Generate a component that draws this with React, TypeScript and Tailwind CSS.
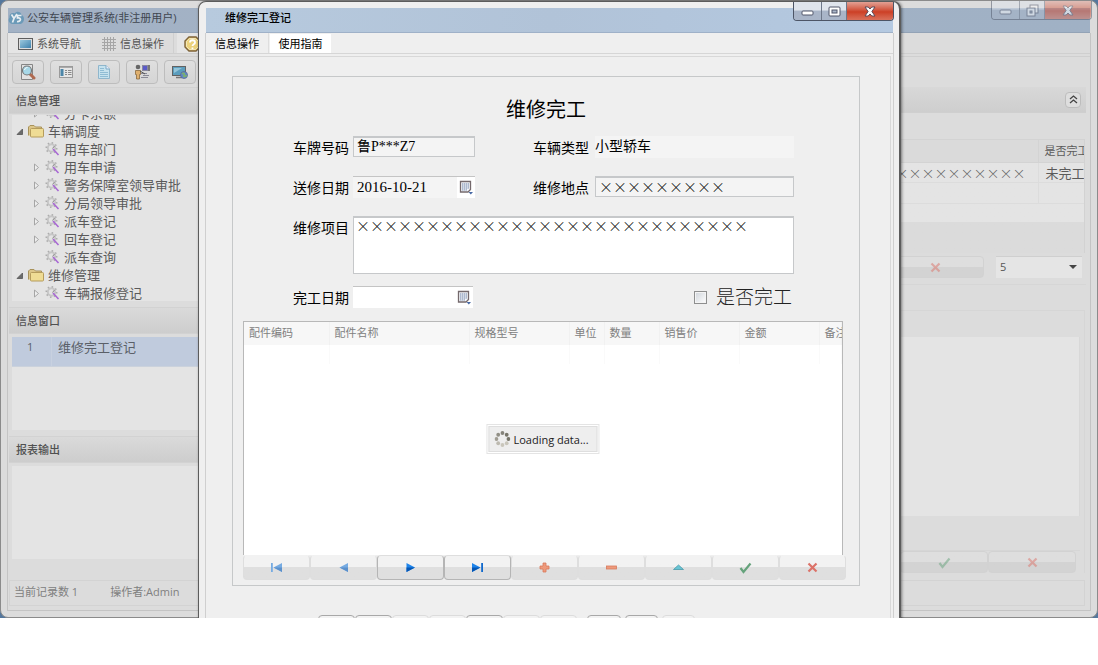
import React, { useState } from "react";

const UI = "font-['Open_Sans','Noto_Sans_CJK_SC',sans-serif]";
const CJK = "font-['Noto_Sans_CJK_SC',sans-serif]";
const FIELD = "font-['Liberation_Serif','Noto_Sans_CJK_SC',serif]";

/* ---------- icons ---------- */

function WindowButtons({ dim = false, restore = false }: { dim?: boolean; restore?: boolean }) {
  return (
    <div
      className={`absolute top-0 right-[5px] flex h-[19px] overflow-hidden rounded-b border border-t-0 border-[#4d5566] ${dim ? "opacity-50" : ""}`}
    >
      <button aria-label="最小化" className="flex w-[27px] items-end justify-center bg-linear-to-b from-[#dfe4ec] from-45% to-[#a9b5c8] to-50% pb-1">
        <svg width="13" height="6" viewBox="0 0 13 6"><rect x="1" y="1" width="11" height="4" rx="1" fill="#fff" stroke="#50566a" /></svg>
      </button>
      <button aria-label="最大化" className="flex w-[26px] items-center justify-center border-x border-[#6d7789] bg-linear-to-b from-[#dfe4ec] from-45% to-[#a9b5c8] to-50%">
        {restore ? (
          <svg width="13" height="13" viewBox="0 0 13 13">
            <rect x="4" y="1" width="8" height="8" fill="#fff" stroke="#50566a" />
            <rect x="1" y="4" width="8" height="8" fill="#fff" stroke="#50566a" />
            <rect x="4" y="7" width="2" height="2" fill="#a9b5c8" stroke="#50566a" />
          </svg>
        ) : (
          <svg width="13" height="11" viewBox="0 0 13 11">
            <rect x="1" y="1" width="11" height="9" rx="1" fill="#fff" stroke="#50566a" />
            <rect x="4" y="4" width="5" height="3" fill="#a9b5c8" stroke="#50566a" />
          </svg>
        )}
      </button>
      <button aria-label="关闭" className="flex w-[46px] items-center justify-center bg-linear-to-b from-[#e2a094] from-0% via-[#cc3f25] via-55% to-[#d9705a]">
        <svg width="12" height="11" viewBox="0 0 12 11">
          <path d="M1 1h3.2L6 3l1.800-2H11L7.900 5.500 11 10H7.800L6 8l-1.800 2H1l3.100-4.500z" fill="#fff" stroke="#5a4a58" />
        </svg>
      </button>
    </div>
  );
}

function MonitorIcon() {
  return (
    <svg width="15" height="12" viewBox="0 0 15 12">
      <defs>
        <linearGradient id="mon" x1="0" y1="0" x2="1" y2="1">
          <stop offset="0" stopColor="#9cc9de" /><stop offset="1" stopColor="#3f82ad" />
        </linearGradient>
      </defs>
      <rect x=".5" y=".5" width="14" height="11" fill="#ddd" stroke="#5e5e5e" />
      <rect x="2" y="2" width="11" height="8" fill="url(#mon)" />
    </svg>
  );
}

function GridIcon() {
  return (
    <svg width="14" height="14" viewBox="0 0 14 14" stroke="#a6a6a6" fill="none">
      <path d="M2.500 0v14M5.500 0v14M8.500 0v14M11.500 0v14M0 2.500h14M0 5.500h14M0 8.500h14M0 11.500h14" />
    </svg>
  );
}

function HelpIcon() {
  return (
    <svg width="17" height="16" viewBox="0 0 17 16" className="shrink-0">
      <path d="M5 1h7l4 4v6l-4 4H5l-4-4V5z" fill="#ecd27c" stroke="#7d6238" strokeWidth="1.400" />
      <path d="M5.500 2.500h6l3 3v5l-3 3h-6l-3-3v-5z" fill="none" stroke="#f3e7b8" />
      <path d="M6 6.500C6 3.500 11 3.500 11 6.500 11 8.500 8.500 8 8.500 10M8.500 11.500V13" fill="none" stroke="#fff" strokeWidth="1.800" />
    </svg>
  );
}

function LogoIcon() {
  return (
    <svg width="17" height="14" viewBox="0 0 17 14">
      <path d="M5 13C1 13-.5 9 1.500 6.500 1 3 4 1 6.500 2.500 9-.500 13 1 13.500 4 17 5 17 12 12.500 13z" fill="#6b9ab8" />
      <path d="M3.500 3.500l2.500 4 3-4.500M6 7.500L4.500 11.500M13.500 4.500H9.500v2.500c4-1 4 4-.5 3.500" fill="none" stroke="#e8eef2" strokeWidth="1.700" />
    </svg>
  );
}

const toolIcons: { name: string; icon: React.ReactNode }[] = [
  {
    name: "查询",
    icon: (
      <svg width="16" height="16" viewBox="0 0 16 16">
        <path d="M1.500.5h11v15h-11z" fill="#e2e2e2" stroke="#858585" />
        <path d="M9.500 9.500l4.500 4.500" stroke="#b06a50" strokeWidth="3" strokeLinecap="round" />
        <circle cx="7" cy="6.500" r="4.500" fill="#a7d8e8" stroke="#777" strokeWidth="1.200" />
        <path d="M4.500 6c.5-2 2-2.500 3-2.500" stroke="#fff" fill="none" />
      </svg>
    ),
  },
  {
    name: "列表",
    icon: (
      <svg width="14" height="12" viewBox="0 0 14 12">
        <rect x=".5" y=".5" width="13" height="11" fill="#e6e6e6" stroke="#9a9a9a" />
        <rect x="1.500" y="3" width="3" height="7" fill="#4c86a8" />
        <path d="M6 4.500h2M9 4.500h3.500M6 6.500h2M9 6.500h3.500M6 8.500h2M9 8.500h3.500" stroke="#888" />
        <path d="M1 1.500h12" stroke="#aaa" />
      </svg>
    ),
  },
  {
    name: "文档",
    icon: (
      <svg width="14" height="16" viewBox="0 0 14 16">
        <path d="M1.500 1.500H9l3.500 3.500v9.500h-11z" fill="#c6e2ee" stroke="#8fb6cc" />
        <path d="M9 1.500V5h3.500" fill="#eef" stroke="#7ba9c4" />
        <path d="M3 4.500h4M3 6.500h4M3 8.500h8M3 10.500h8M3 12.500h8" stroke="#8fbcd4" />
      </svg>
    ),
  },
  {
    name: "人员",
    icon: (
      <svg width="16" height="16" viewBox="0 0 16 16">
        <circle cx="4" cy="3" r="2.300" fill="#666" />
        <path d="M1.500 6.500h5v4h-1V15h-3v-4.500h-1z" fill="#dfb06f" stroke="#8a6a3d" strokeWidth=".8" />
        <rect x="8.500" y="1.500" width="5" height="5" fill="#5a5ac8" stroke="#8888a0" />
        <rect x="14" y="1" width="2" height="6" fill="#777" />
        <path d="M7 9.500h6M9 11.500h6M7 13.500h7" stroke="#8a8a96" strokeWidth="1.200" />
        <path d="M6 7l5 3" stroke="#555" />
      </svg>
    ),
  },
  {
    name: "远程",
    icon: (
      <svg width="18" height="16" viewBox="0 0 18 16">
        <rect x="1.500" y="2.500" width="13" height="9" fill="#5b9dbd" stroke="#626262" />
        <path d="M3 4h8L3 9z" fill="#94c5da" />
        <path d="M5 13.500h6" stroke="#777" strokeWidth="1.500" />
        <circle cx="13" cy="11" r="3.500" fill="#5f86c8" stroke="#5b6a90" strokeWidth=".8" />
        <path d="M11 10c2-2 3 0 2 1.500S15 13 15.500 11" stroke="#7eb36a" fill="none" strokeWidth="1.500" />
      </svg>
    ),
  },
];

function FolderIcon() {
  return (
    <svg width="16" height="14" viewBox="0 0 16 14" className="shrink-0">
      <path d="M.5 11.500V3L2 1.500h4L7.500 3h6V12" fill="#dcc68a" stroke="#a8925a" />
      <rect x="2.500" y="4.500" width="13" height="8.500" rx="1" fill="#efdc94" stroke="#b59c5c" />
    </svg>
  );
}

function WandIcon() {
  return (
    <svg width="15" height="14" viewBox="0 0 15 14" className="shrink-0">
      <circle cx="6.500" cy="6" r="3.700" fill="none" stroke="#c6c6c6" strokeWidth="2" />
      <circle cx="6.500" cy="6" r="5.200" fill="none" stroke="#adadad" strokeWidth="1.600" strokeDasharray="1.500 2.500" />
      <path d="M8 7l5.500 6" stroke="#a867d4" strokeWidth="1.600" />
      <path d="M7.500 6.500l2-2.500" stroke="#888" strokeWidth="1" />
    </svg>
  );
}

function CalendarIcon() {
  return (
    <svg width="14" height="15" viewBox="0 0 14 15">
      <path d="M1.500 1.500h10v8l-2.500 2.500h-7.500z" fill="#f4f6fa" stroke="#74696c" strokeWidth="1.300" />
      <path d="M3.500 3v7.500M5.500 3v7.500M7.500 3v7.500M9.500 3v5.500M3 4h7M3 6h7M3 8h7M3 10h5" stroke="#a9b6cc" strokeWidth=".9" />
      <path d="M9.500 12h4.500l-2.200 2.500z" fill="#4668a4" />
    </svg>
  );
}

type Glyph = "first" | "prev" | "next" | "last" | "add" | "del" | "up" | "ok" | "cancel";

function NavGlyph({ kind }: { kind: Glyph }) {
  const shapes: Record<Glyph, React.ReactNode> = {
    first: <g fill="#76abe2"><rect x="1" y="2" width="1.800" height="9" /><path d="M12 2v9L3.500 6.500z" /><path d="M12 6.500V11L3.500 6.500z" fill="#5c91cc" /></g>,
    prev: <g fill="#76abe2"><path d="M11 2v9L2.500 6.500z" /><path d="M11 6.500V11L2.500 6.500z" fill="#5c91cc" /></g>,
    next: <g fill="#1f84ea"><path d="M2.500 2v9L11 6.500z" /><path d="M2.500 6.500V11L11 6.500z" fill="#0556b4" /></g>,
    last: <g fill="#1f84ea"><path d="M1 2v9l8.500-4.500z" /><path d="M1 6.500V11l8.500-4.500z" fill="#0556b4" /><rect x="10.200" y="2" width="1.800" height="9" fill="#0f68cc" /></g>,
    add: <path d="M5 2h3v3h3v3H8v3H5V8H2V5h3z" fill="#ee9a7c" stroke="#d87a5c" strokeWidth=".8" />,
    del: <rect x="1.500" y="5" width="10" height="3" fill="#ee9a7c" stroke="#d87a5c" strokeWidth=".8" />,
    up: <path d="M6.500 4l5 4.500h-10z" fill="#68c4d4" stroke="#4a9aab" strokeWidth=".8" />,
    ok: <path d="M1.500 7l3 4L11.500 2.500" fill="none" stroke="#66a37c" strokeWidth="2.200" />,
    cancel: <path d="M2.500 2.500l8 8M10.500 2.500l-8 8" stroke="#dc7268" strokeWidth="2.200" />,
  };
  return <svg width="13" height="13" viewBox="0 0 13 13">{shapes[kind]}</svg>;
}

/* ---------- main window ---------- */

function SectionHeader({ title }: { title: string }) {
  return (
    <h2 className="flex h-[27px] items-center border-y border-[#d2d2d2] bg-linear-to-b from-[#dadada] to-[#cdcdcd] pt-px pl-[7px] text-[11px] font-medium text-[#505050]">
      {title}
    </h2>
  );
}

const tree: { label: string; folder?: boolean; arrow?: boolean }[] = [
  { label: "分卡余额", arrow: true },
  { label: "车辆调度", folder: true },
  { label: "用车部门" },
  { label: "用车申请", arrow: true },
  { label: "警务保障室领导审批", arrow: true },
  { label: "分局领导审批", arrow: true },
  { label: "派车登记", arrow: true },
  { label: "回车登记", arrow: true },
  { label: "派车查询" },
  { label: "维修管理", folder: true },
  { label: "车辆报修登记", arrow: true },
];

function Sidebar() {
  return (
    <aside className="flex w-[200px] shrink-0 flex-col pl-px">
      <SectionHeader title="信息管理" />
      <div className="mt-px ml-[3px] h-[186px] overflow-hidden bg-[#e4e4e4]">
        <ul className="-mt-[11px] text-[13px] leading-[18px] text-[#5a5a5a]">
          {tree.map((n) => (
            <li key={n.label} className={`flex h-[18px] items-center gap-1 whitespace-nowrap ${n.folder ? "pl-1" : "pl-[21px]"}`}>
              <svg width="8" height="9" viewBox="0 0 8 9" className="shrink-0">
                {n.folder && <path d="M6.500 2v5.500H1z" fill="#6b6b6b" stroke="#555" strokeWidth=".8" />}
                {n.arrow && <path d="M1.500 1v7l4-3.500z" fill="#eee" stroke="#a5a5a5" />}
              </svg>
              {n.folder ? <FolderIcon /> : <WandIcon />}
              <span>{n.label}</span>
            </li>
          ))}
        </ul>
      </div>
      <div className="mt-[6px]"><SectionHeader title="信息窗口" /></div>
      <div className="mt-[3px] ml-[3px] h-[93px] bg-[#e4e4e4]">
        <button className="flex h-[30px] w-full items-start border-b border-[#cbd2dc] bg-[#c0cbdd] text-left text-[#5a5f68]">
          <span className="h-full w-10 border-r border-[#c8d1e0] pt-[2px] pl-[15px] text-[11px]">1</span>
          <span className="pt-px pl-[6px] text-[13px] leading-[18px]">维修完工登记</span>
        </button>
      </div>
      <div className="mt-[6px]"><SectionHeader title="报表输出" /></div>
      <div className="mt-[3px] ml-[3px] h-[93px] bg-[#e4e4e4]" />
    </aside>
  );
}

function DimNavButton({ kind, wide = false }: { kind: Glyph; wide?: boolean }) {
  return (
    <button
      aria-label={kind}
      className={`flex h-[22px] items-center justify-center rounded-sm border border-[#d2d2d2] bg-linear-to-b from-[#dedede] from-50% to-[#d3d3d3] to-50% ${wide ? "w-[98px]" : "w-[88px]"}`}
    >
      <span className="flex opacity-50"><NavGlyph kind={kind} /></span>
    </button>
  );
}

function RecordPane() {
  return (
    <section className="flex min-w-0 flex-1 flex-col pr-1">
      <div className="flex h-[26px] items-center justify-end border-b border-[#cfcfcf] bg-linear-to-b from-[#d8d8d8] to-[#cecece] pr-[5px]">
        <button aria-label="收起" className="flex h-4 w-4 items-center justify-center rounded-sm border border-[#bdbdbd] bg-[#dedede]">
          <svg width="9" height="9" viewBox="0 0 9 9" fill="none" stroke="#444" strokeWidth="1.300"><path d="M1 4l3.500-3L8 4M1 8l3.500-3L8 8" /></svg>
        </button>
      </div>
      <div className="mt-[26px] mr-px h-[114px] overflow-hidden border-r border-[#d2d2d2] bg-linear-to-b from-[#e4e4e4] from-73% to-[#dbdbdb] to-73%">
        <table className="w-full table-fixed border-collapse text-[#5a5a5a]">
          <thead>
            <tr className="h-[23px] bg-[#dadada]">
              <th className="border border-[#d3d3d3]" />
              <th className="w-[46px] border-y border-l border-[#d3d3d3] pl-[6px] text-left text-[11px] font-normal whitespace-nowrap">是否完工</th>
            </tr>
          </thead>
          <tbody>
            <tr className="h-5">
              <td className={`border-r border-[#dcdcdc] pr-[12px] text-right text-[13px] leading-[16px] font-light ${CJK}`}>××××××××××</td>
              <td className="pl-[7px] text-[13px] leading-[16px] whitespace-nowrap">未完工</td>
            </tr>
            <tr className="h-[21px] border-y border-[#dcdcdc]">
              <td className="border-r border-[#dcdcdc]" />
              <td />
            </tr>
          </tbody>
        </table>
      </div>
      <div className="flex h-8 items-center justify-end gap-3 border-b border-[#d6d6d6] pt-px pr-1">
        <div className="mb-1"><DimNavButton kind="cancel" wide /></div>
        <label className="relative mb-1 flex h-[22px] items-center">
          <span className="sr-only">每页记录数</span>
          <select className="h-[22px] w-[86px] appearance-none border-t border-[#cfcfcf] bg-[#e5e5e5] pl-1 text-[11px] text-[#555]">
            <option>5</option>
          </select>
          <svg width="8" height="4" viewBox="0 0 8 4" className="pointer-events-none absolute right-[5px]"><path d="M0 0h8L4 4z" fill="#444" /></svg>
        </label>
      </div>
      <div className="mt-[25px] mr-px border border-b-0 border-[#d6d6d6] pt-[26px] pr-[4px]">
        <div className="h-[179px] border-r border-[#d8d8d8] bg-[#e4e4e4]" />
        <div className="h-[35px] border-b border-[#d6d6d6]" />
        <div className="flex justify-end pr-1">
          <DimNavButton kind="ok" />
          <DimNavButton kind="cancel" />
        </div>
      </div>
    </section>
  );
}

function MainWindow() {
  return (
    <div className="relative rounded-lg border border-[#8b8b8b] bg-[#dcdcdc] px-[6px] pt-[7px] pb-[6px]">
      <WindowButtons dim restore />
      <header className="mx-px flex h-[25px] items-start gap-[2px] border-b border-[#93a3b6] bg-linear-to-r from-[#a3b2c5] to-[#a0b1c5]">
        <span className="pt-[3px]"><LogoIcon /></span>
        <h1 className="text-[11px] leading-[19px] text-[#3f4650]">公安车辆管理系统(非注册用户)</h1>
      </header>
      <div className="border-x border-b border-[#c4c4c4]">
        <nav className="flex h-[21px] items-stretch gap-[3px] border-b border-[#cfcfcf] text-[11px] text-[#555]">
          <button className="flex w-[82px] items-center gap-1 bg-[#e5e5e5] pt-[2px] pl-[10px]"><MonitorIcon />系统导航</button>
          <button className="flex w-[81px] items-center gap-1 border-r border-[#cfcfcf] pt-[2px] pl-[9px]"><GridIcon />信息操作</button>
          <button aria-label="使用指南" className="flex items-center bg-[#e5e5e5] pt-[2px] pl-[7px]"><HelpIcon /></button>
        </nav>
        <div className="mt-[2px] border-t border-[#cfcfcf]">
          <div className="flex h-[30px] items-center gap-[6px] pl-1">
            {toolIcons.map((t) => (
              <button key={t.name} aria-label={t.name} className="flex h-6 w-8 items-center justify-center rounded border border-[#bdbdbd] bg-linear-to-b from-[#dfdfdf] to-[#d5d5d5]">
                {t.icon}
              </button>
            ))}
          </div>
          <div className="flex">
            <Sidebar />
            <RecordPane />
          </div>
          <footer className="mt-[7px] mr-[5px] mb-[4px] ml-px flex h-[26px] items-center gap-8 border border-[#d3d3d3] pb-[2px] pl-1 text-[11px] text-[#808080]">
            <span>当前记录数 1</span>
            <span>操作者:Admin</span>
          </footer>
        </div>
      </div>
    </div>
  );
}

/* ---------- dialog ---------- */

const columns: { label: string; width: string }[] = [
  { label: "配件编码", width: "w-[85px]" },
  { label: "配件名称", width: "w-[140px]" },
  { label: "规格型号", width: "w-[100px]" },
  { label: "单位", width: "w-[35px]" },
  { label: "数量", width: "w-[55px]" },
  { label: "销售价", width: "w-[80px]" },
  { label: "金额", width: "w-[80px]" },
  { label: "备注", width: "" },
];

const navigator: { kind: Glyph; label: string; active?: boolean }[] = [
  { kind: "first", label: "首记录" },
  { kind: "prev", label: "上一条" },
  { kind: "next", label: "下一条", active: true },
  { kind: "last", label: "末记录", active: true },
  { kind: "add", label: "增加" },
  { kind: "del", label: "删除" },
  { kind: "up", label: "编辑" },
  { kind: "ok", label: "保存" },
  { kind: "cancel", label: "取消" },
];

const spinner = ["#77756a", "#77756a", "#c9c6bb", "#c9c6bb", "#bdbab0", "#a09d93", "#918f85", "#85837a"];

function LoadingBox() {
  return (
    <div role="status" className="absolute top-1/2 left-1/2 -translate-x-1/2 -translate-y-1/2 border border-[#e4e4e4] bg-white p-px">
      <div className="flex h-[26px] items-center gap-[3px] border border-[#dedede] bg-[#eeeeee] pr-[8px] pl-[5px] text-[11px] whitespace-nowrap text-[#222]">
        <svg width="16" height="16" viewBox="0 0 16 16" className="shrink-0">
          {spinner.map((c, i) => {
            const a = ((i * 45 - 45) * Math.PI) / 180;
            return <circle key={i} cx={8 + 6 * Math.cos(a)} cy={8 + 6 * Math.sin(a)} r="1.900" fill={c} />;
          })}
        </svg>
        <span className="pt-1">Loading data...</span>
      </div>
    </div>
  );
}

function DateField({ id, value, onChange, tint }: { id: string; value: string; onChange: (v: string) => void; tint: boolean }) {
  return (
    <div className={`flex h-[22px] items-center border-t border-[#c4c4c4] ${tint ? "w-[122px]" : "w-[120px]"}`}>
      <input
        id={id}
        value={value}
        onChange={(e) => onChange(e.target.value)}
        className={`h-full min-w-0 flex-1 pb-px pl-1 text-[15px] outline-none ${FIELD} ${tint ? "bg-[#f4f4f4]" : "bg-white"}`}
      />
      <button aria-label="选择日期" className="flex h-full w-[18px] items-center justify-center bg-white"><CalendarIcon /></button>
    </div>
  );
}

const peek = [
  "w-[37px] border-[#a8a8a8]",
  "w-[37px] border-[#a8a8a8]",
  "w-[37px] border-[#dcdcdc]",
  "w-[37px] border-[#dcdcdc]",
  "w-[37px] border-[#a8a8a8]",
  "w-[37px] border-[#dcdcdc]",
  "w-[37px] border-[#dcdcdc]",
  "ml-[10px] w-[34px] border-[#a8a8a8]",
  "ml-1 w-[33px] border-[#a8a8a8]",
  "ml-1 w-[33px] border-[#dcdcdc]",
];

function RepairDialog() {
  const [sent, setSent] = useState("2016-10-21");
  const [done, setDone] = useState("");
  const label = "pt-[3px] text-[14px] leading-[18px]";
  const box = "h-[21px] border border-t-2 border-[#c6c8ca] bg-[#f4f4f4] pb-[2px] pl-[3px] text-[14px] outline-none";
  return (
    <div
      role="dialog"
      aria-label="维修完工登记"
      className="absolute top-px right-[197px] left-[198px] rounded-t-lg border border-r-2 border-[#5c5c5c] bg-[#efefef] pt-[6px] pr-[5px] pl-[6px] text-black shadow-[1px_0_3px_rgba(0,0,0,0.45)]"
    >
      <WindowButtons />
      <header className="mx-px h-[25px] border-b border-[#9fb1c8] bg-linear-to-r from-[#b7cade] via-[#b1c3d8] to-[#b4c9e1] pl-[19px]">
        <h2 className="text-[11px] leading-[19px] font-medium">维修完工登记</h2>
      </header>
      <div className="border-x border-[#cfcfcf]">
        <nav className="flex h-[21px] border-b border-[#d6d6d6] text-[11px]">
          <button className="w-[63px] border-r border-[#dedede] pt-[3px]">信息操作</button>
          <button className="mt-px ml-px w-[61px] bg-white pt-[2px]">使用指南</button>
        </nav>
        <div className="mt-[2px] mr-[2px] border-t border-r border-[#d8d8d8] pt-[19px]">
          <section className="mr-[30px] ml-[26px] border border-[#c6c8c9] pb-[5px]">
            <h1 className="pt-[18px] text-center text-[20px] leading-[30px]">维修完工</h1>
            <form className="mt-[11px] grid grid-cols-[60px_180px_62px_minmax(0,1fr)] gap-y-[18px] pr-[65px] pl-[60px]" onSubmit={(e) => e.preventDefault()}>
              <label htmlFor="plate" className={label}>车牌号码</label>
              <input id="plate" readOnly value="鲁P***Z7" className={`${box} ${FIELD} w-[122px]`} />
              <label htmlFor="kind" className={label}>车辆类型</label>
              <input id="kind" readOnly value="小型轿车" className={`h-[22px] min-w-0 bg-[#f4f4f4] pb-1 text-[14px] outline-none ${CJK}`} />

              <label htmlFor="sent" className={label}>送修日期</label>
              <DateField id="sent" value={sent} onChange={setSent} tint />
              <label htmlFor="place" className={label}>维修地点</label>
              <input id="place" readOnly value="×××××××××" className={`${box} ${CJK} min-w-0 font-light`} />

              <label htmlFor="items" className={label}>维修项目</label>
              <textarea
                id="items"
                readOnly
                value={"×".repeat(28)}
                className={`col-span-3 block h-[58px] resize-none border border-t-2 border-[#c6c8ca] bg-white pl-[2px] text-[14px] leading-[14px] font-light outline-none ${CJK}`}
              />
            </form>
            <div className="mt-3 flex h-[22px] items-center justify-between pr-[67px] pl-[60px]">
              <div className="flex">
                <label htmlFor="done" className={`w-[60px] ${label}`}>完工日期</label>
                <DateField id="done" value={done} onChange={setDone} tint={false} />
              </div>
              <label className="flex items-center gap-[9px] text-[19px] leading-[22px] font-light text-[#222]">
                <input type="checkbox" className="h-[13px] w-[13px] appearance-none border border-[#8e8f8f] bg-linear-to-br from-[#cfd4da] to-white shadow-[inset_0_0_0_1px_#f4f4f4]" />
                是否完工
              </label>
            </div>
            <div className="mt-[13px] mr-4 ml-[10px]">
              <div className="relative h-[234px] overflow-hidden border border-b-0 border-[#b8b8b8] bg-white">
                <table className="w-full table-fixed border-collapse text-[11px] text-[#808080]">
                  <thead>
                    <tr className="h-[23px] bg-[#f7f7f7]">
                      {columns.map((c) => (
                        <th key={c.label} className={`border-r border-[#f1f1f1] pl-[5px] text-left font-normal whitespace-nowrap ${c.width}`}>{c.label}</th>
                      ))}
                    </tr>
                  </thead>
                  <tbody>
                    <tr className="h-[19px]">
                      {columns.map((c) => <td key={c.label} className="border-r border-[#fafafa]" />)}
                    </tr>
                  </tbody>
                </table>
                <LoadingBox />
              </div>
              <div className="-mr-[3px] grid grid-cols-9">
                {navigator.map((n) => (
                  <button
                    key={n.kind}
                    aria-label={n.label}
                    className={`flex h-[25px] items-center justify-center rounded-sm border bg-linear-to-b from-[#f2f2f2] from-50% to-[#dfdfdf] to-50% ${n.active ? "border-[#b5b5b5] border-t-[#dedede]" : "border-[#dedede] border-t-[#f2f2f2]"}`}
                  >
                    <NavGlyph kind={n.kind} />
                  </button>
                ))}
              </div>
            </div>
          </section>
          <div className="mt-[29px] flex justify-center pr-[84px]">
            {peek.map((c, i) => <div key={i} className={`h-6 rounded border bg-[#f3f3f3] ${c}`} />)}
          </div>
        </div>
      </div>
    </div>
  );
}

export default function App() {
  return (
    <div className={`relative overflow-hidden bg-[#54779d] ${UI}`}>
      <MainWindow />
      <RepairDialog />
    </div>
  );
}
